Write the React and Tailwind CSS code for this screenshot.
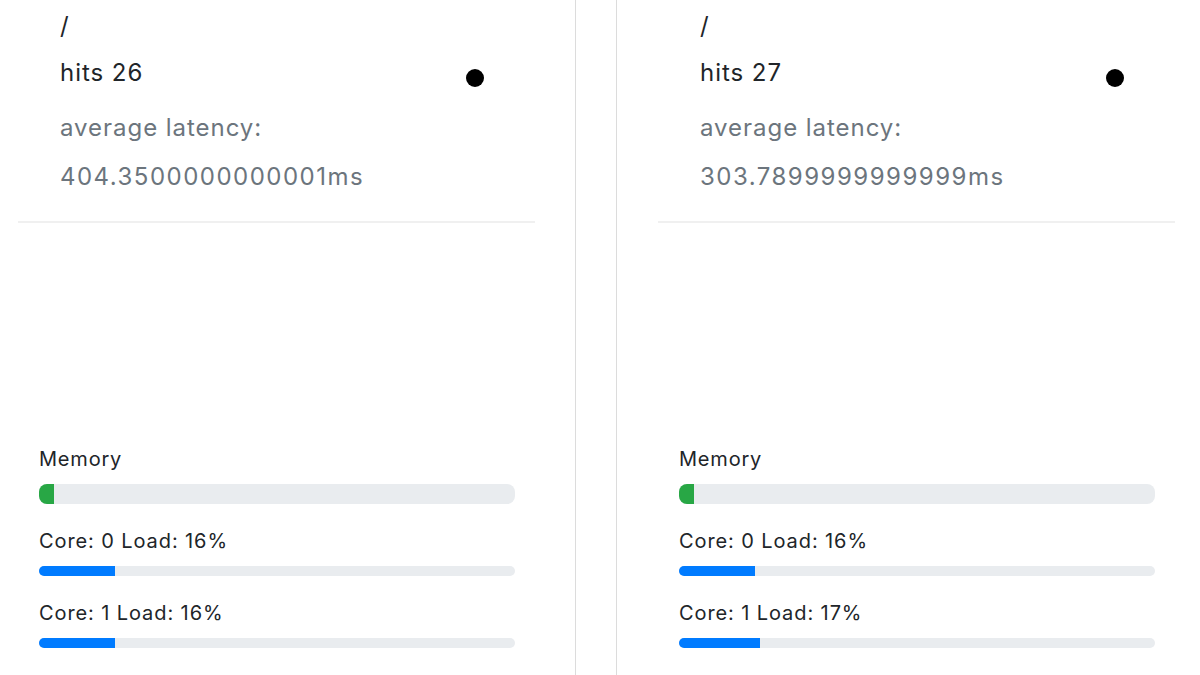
import React from "react";

const servers = [
  { hits: 26, latency: "404.3500000000001ms", mem: 3.15, cores: [16, 16] },
  { hits: 27, latency: "303.7899999999999ms", mem: 3.15, cores: [16, 17] },
];

function Card({ s, first }) {
  return (
    <div
      className={
        "shrink-0 w-[600px] h-full border border-[#dcdcdc] flex flex-col " +
        (first ? "ml-[-24px]" : "ml-[40px]")
      }
    >
      <div className="ml-[41px] mr-[40px] border-b-2 border-[#f0f0f0] pl-[42px] pt-[8px] pb-[26px]">
        <div className="h-[36px] leading-[36px] text-[24px] tracking-[0.04em] text-[#212529]">/</div>
        <div className="mt-[11px] flex items-start justify-between">
          <div className="h-[36px] leading-[36px] text-[24px] tracking-[0.04em] text-[#212529]">
            hits {s.hits}
          </div>
          <div className="mt-[14px] mr-[51px] w-[18px] h-[18px] rounded-full bg-black" />
        </div>
        <div className="mt-[19px] h-[36px] leading-[36px] text-[24px] tracking-[0.04em] text-[#6c757d]">
          average latency:
        </div>
        <div className="mt-[13px] h-[36px] leading-[36px] text-[24px] tracking-[0.062em] text-[#6c757d]">
          {s.latency}
        </div>
      </div>
      <div className="mt-[221px] ml-[62px] mr-[60px] flex flex-col text-[#212529]">
        <div className="h-[30px] leading-[30px] text-[20px] tracking-[0.04em]">Memory</div>
        <div className="mt-[10px] h-[20px] rounded-lg bg-[#e9ecef] overflow-hidden flex">
          <div className="h-full bg-[#28a745]" style={{ width: s.mem + "%" }} />
        </div>
        {s.cores.map((c, i) => (
          <div key={i} className="flex flex-col">
            <div className="mt-[22px] h-[30px] leading-[30px] text-[20px] tracking-[0.045em]">
              Core: {i} Load: {c}%
            </div>
            <div className="mt-[10px] h-[10px] rounded-full bg-[#e9ecef] overflow-hidden flex">
              <div className="h-full bg-[#007bff]" style={{ width: c + "%" }} />
            </div>
          </div>
        ))}
      </div>
    </div>
  );
}

export default function App() {
  return (
    <div
      className="w-[1200px] h-[675px] overflow-hidden bg-white flex"
      style={{ fontFamily: "Inter, 'Noto Sans', sans-serif" }}
    >
      <div className="flex h-[700px] -mt-px">
        {servers.map((s, i) => (
          <Card key={i} s={s} first={i === 0} />
        ))}
      </div>
    </div>
  );
}
